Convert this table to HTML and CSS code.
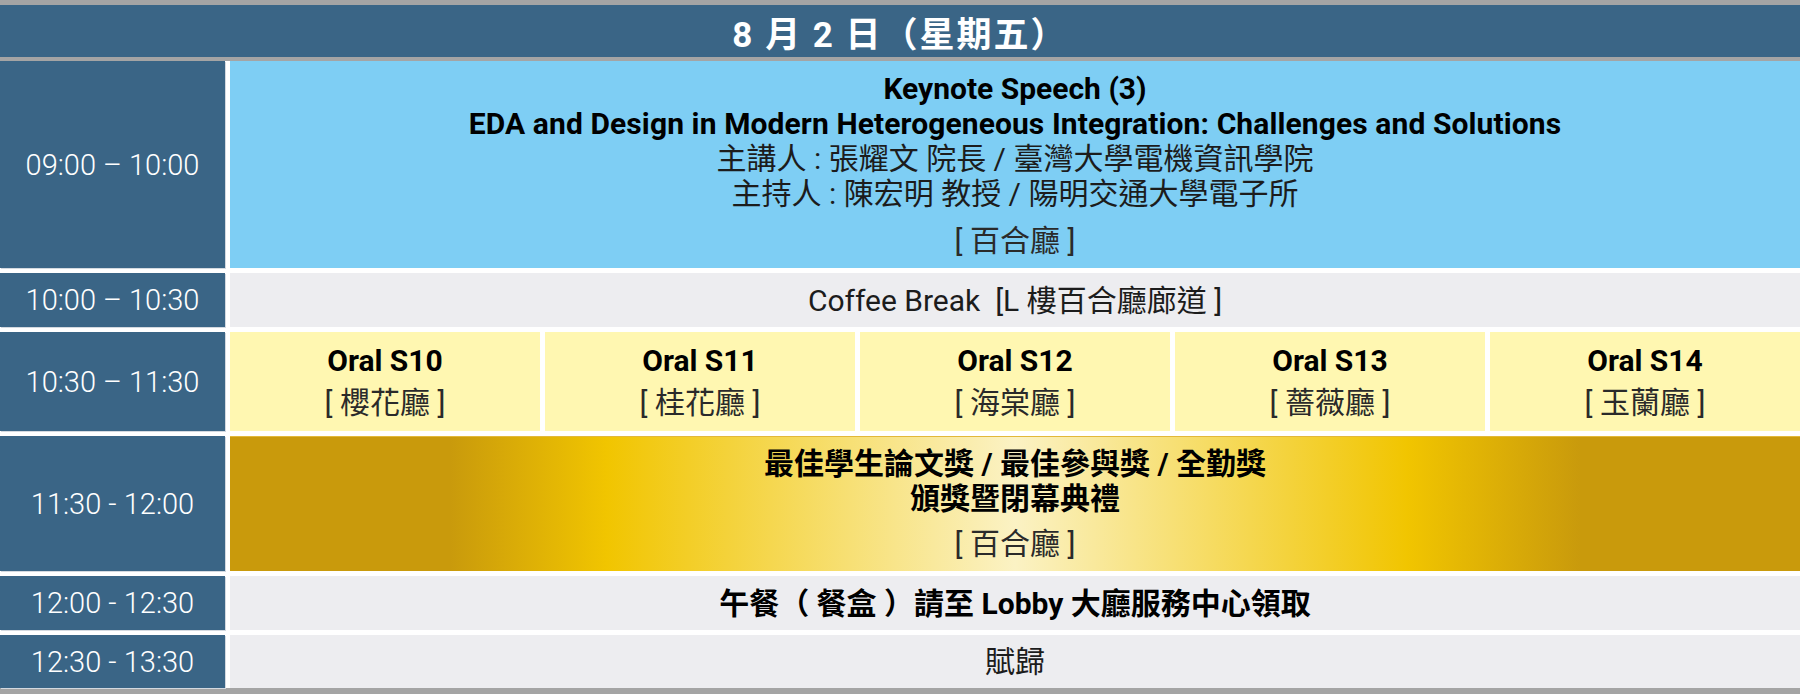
FILE: index.html
```html
<!DOCTYPE html>
<html lang="zh-Hant">
<head>
<meta charset="utf-8">
<title>8 月 2 日 議程</title>
<link rel="stylesheet" href="styles.css">
</head>
<body>
<div class="schedule">
  <div class="day">8 月 2 日（星期五）</div>
  <div class="grid">
    <div class="time">09:00 – 10:00</div>
    <div class="cell span5 keynote">
      <div class="b">Keynote Speech (3)</div>
      <div class="b wide">EDA and Design in Modern Heterogeneous Integration: Challenges and Solutions</div>
      <div>主講人 : 張耀文 院長 / 臺灣大學電機資訊學院</div>
      <div>主持人 : 陳宏明 教授 / 陽明交通大學電子所</div>
      <div class="room room-lg">[ 百合廳 ]</div>
    </div>

    <div class="time">10:00 – 10:30</div>
    <div class="cell span5 grey">
      <div>Coffee Break&nbsp; [L 樓百合廳廊道 ]</div>
    </div>

    <div class="time">10:30 – 11:30</div>
    <div class="cell oral">
      <div class="b">Oral S10</div>
      <div class="room room-sm">[ 櫻花廳 ]</div>
    </div>
    <div class="cell oral">
      <div class="b">Oral S11</div>
      <div class="room room-sm">[ 桂花廳 ]</div>
    </div>
    <div class="cell oral">
      <div class="b">Oral S12</div>
      <div class="room room-sm">[ 海棠廳 ]</div>
    </div>
    <div class="cell oral">
      <div class="b">Oral S13</div>
      <div class="room room-sm">[ 薔薇廳 ]</div>
    </div>
    <div class="cell oral">
      <div class="b">Oral S14</div>
      <div class="room room-sm">[ 玉蘭廳 ]</div>
    </div>

    <div class="time">11:30 - 12:00</div>
    <div class="cell span5 gold">
      <div class="b">最佳學生論文獎 / 最佳參與獎 / 全勤獎</div>
      <div class="b">頒獎暨閉幕典禮</div>
      <div class="room room-md">[ 百合廳 ]</div>
    </div>

    <div class="time">12:00 - 12:30</div>
    <div class="cell span5 grey">
      <div class="b">午餐（ 餐盒 ）請至 Lobby 大廳服務中心領取</div>
    </div>

    <div class="time">12:30 - 13:30</div>
    <div class="cell span5 grey">
      <div>賦歸</div>
    </div>
  </div>
</div>
</body>
</html>
```

FILE: styles.css
```css
html, body {
  margin: 0;
  padding: 0;
  background: #ffffff;
}

body {
  font-family: Roboto, "Noto Sans CJK TC", "Noto Sans CJK SC", sans-serif;
}

.schedule {
  width: 1800px;
  border-top: 5px solid #a4a4a4;
  border-bottom: 6px solid #a4a4a4;
  background: #ffffff;
}

.day {
  height: 52px;
  background: #3a6586;
  color: #ffffff;
  font-weight: 700;
  font-size: 35px;
  letter-spacing: 2px;
  display: flex;
  align-items: center;
  justify-content: center;
  border-bottom: 4px solid #a4a4a4;
}

.grid {
  display: grid;
  grid-template-columns: 225px repeat(5, 1fr);
  grid-template-rows: 207px 54px 99px 135px 54px 53px;
  gap: 5px;
}

.time {
  background: #3a6586;
  color: #ffffff;
  font-weight: 300;
  font-size: 29px;
  display: flex;
  align-items: center;
  justify-content: center;
  box-shadow: 1px 1px 0 #d3d9e0;
}

.cell {
  display: flex;
  flex-direction: column;
  align-items: center;
  justify-content: center;
  text-align: center;
  font-size: 30px;
  line-height: 35px;
  color: #1c1c1c;
}

.span5 {
  grid-column: span 5;
}

.b {
  font-weight: 700;
  color: #000000;
}

.wide {
  letter-spacing: 0.1px;
}

.room {
  color: #2a2a2a;
}

.room-lg {
  margin-top: 12px;
}

.room-md {
  margin-top: 10px;
}

.room-sm {
  margin-top: 7px;
}

.keynote {
  background: #7ecef4;
}

.grey {
  background: #ededf0;
}

.oral {
  background: #fff7b1;
}

.gold {
  background: linear-gradient(90deg,
    #c99a0c 0%,
    #c99a0c 14%,
    #f1c500 24%,
    #fbf2c4 50%,
    #f1c500 75%,
    #c99a0c 86%,
    #c99a0c 100%);
  box-shadow: inset 0 1px 0 #e2b83a;
}
```
